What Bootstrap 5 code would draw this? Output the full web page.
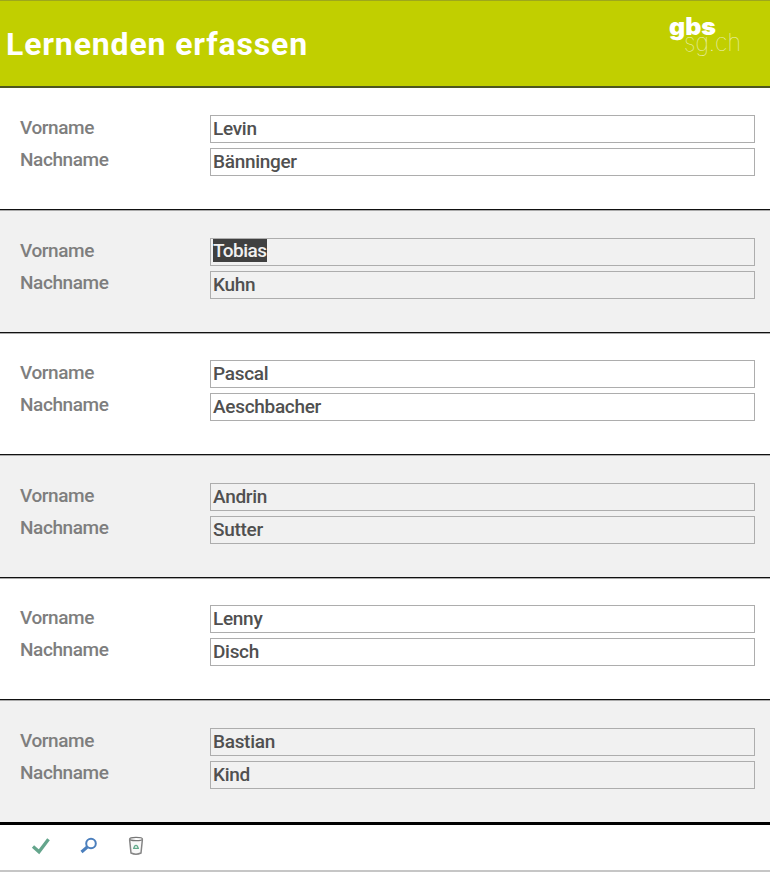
<!DOCTYPE html>
<html lang="de">
<head>
<meta charset="utf-8">
<meta name="viewport" content="width=device-width, initial-scale=1">
<title>Lernenden erfassen</title>
<link href="https://cdn.jsdelivr.net/npm/bootstrap@5.3.0/dist/css/bootstrap.min.css" rel="stylesheet">
<style>
  body { font-family: Roboto, "Liberation Sans", sans-serif; font-size: 19px; height: 872px; overflow: hidden; }
  .app-header { height: 88px; background: #c1cf00; border-top: 1px solid #9da71c; border-bottom: 2px solid #4d5620; padding: 0 23px 0 6px; }
  .app-title { font-size: 32px; font-weight: 700; letter-spacing: .85px; line-height: 86px; }
  .entries { margin-top: -1.5px; }
  .entry { height: 122.5px; padding: 28.7px 15px 0 20px; }
  .entry + .entry { box-shadow: inset 0 1px #111, inset 0 2px #aaa; }
  .entry:nth-child(even) { background: #f1f1f1; }
  .field-row { height: 28px; margin-bottom: 5px; }
  .field-label { flex: 0 0 190px; color: #7e7e7e; line-height: 25px; letter-spacing: -.42px; font-weight: 500; }
  .field-input { height: 28px; border: 1px solid #adadad; border-radius: 0; background: transparent; color: #505050; font-size: 19px; line-height: 26px; padding: 0 2px; letter-spacing: -.3px; font-weight: 500; }
  .field-row + .field-row .field-label { line-height: 24px; }
  .picked { background: #404040; color: #f0f0f0; line-height: 24px; height: 23px; margin-top: 0; letter-spacing: -.5px; display: inline-block; vertical-align: top; }
  .tools { height: 50.5px; border-top: 3px solid #000; border-bottom: 2px solid #c6c6c6; padding: 0 0 2px 31px; }
  .tool-btn { width: 20px; height: 20px; margin-right: 28px; }
  .tool-btn:last-child { margin-left: -1px; }
</style>
<script src="https://cdn.jsdelivr.net/npm/bootstrap@5.3.0/dist/js/bootstrap.bundle.min.js"></script>
</head>
<body class="bg-white">
<header class="app-header d-flex justify-content-between">
  <h1 class="app-title text-white m-0">Lernenden erfassen</h1>
  <svg width="80" height="66" viewBox="667 1 80 66" fill="#fff" aria-label="gbs sg.ch">
    <text x="669" y="35" font-family="Inter, sans-serif" font-weight="900" font-size="24" textLength="47" lengthAdjust="spacingAndGlyphs">gbs</text>
    <text x="684" y="51" font-family="Inter, sans-serif" font-weight="100" font-size="24" opacity=".75" textLength="57" lengthAdjust="spacingAndGlyphs">sg.ch</text>
  </svg>
</header>
<main class="entries">
  <section class="entry">
    <div class="field-row d-flex"><label class="field-label">Vorname</label><div class="field-input form-control flex-fill">Levin</div></div>
    <div class="field-row d-flex"><label class="field-label">Nachname</label><div class="field-input form-control flex-fill">Bänninger</div></div>
  </section>
  <section class="entry">
    <div class="field-row d-flex"><label class="field-label">Vorname</label><div class="field-input form-control flex-fill"><span class="picked">Tobias</span></div></div>
    <div class="field-row d-flex"><label class="field-label">Nachname</label><div class="field-input form-control flex-fill">Kuhn</div></div>
  </section>
  <section class="entry">
    <div class="field-row d-flex"><label class="field-label">Vorname</label><div class="field-input form-control flex-fill">Pascal</div></div>
    <div class="field-row d-flex"><label class="field-label">Nachname</label><div class="field-input form-control flex-fill">Aeschbacher</div></div>
  </section>
  <section class="entry">
    <div class="field-row d-flex"><label class="field-label">Vorname</label><div class="field-input form-control flex-fill">Andrin</div></div>
    <div class="field-row d-flex"><label class="field-label">Nachname</label><div class="field-input form-control flex-fill">Sutter</div></div>
  </section>
  <section class="entry">
    <div class="field-row d-flex"><label class="field-label">Vorname</label><div class="field-input form-control flex-fill">Lenny</div></div>
    <div class="field-row d-flex"><label class="field-label">Nachname</label><div class="field-input form-control flex-fill">Disch</div></div>
  </section>
  <section class="entry">
    <div class="field-row d-flex"><label class="field-label">Vorname</label><div class="field-input form-control flex-fill">Bastian</div></div>
    <div class="field-row d-flex"><label class="field-label">Nachname</label><div class="field-input form-control flex-fill">Kind</div></div>
  </section>
</main>
<footer class="tools d-flex align-items-center">
  <svg class="tool-btn" viewBox="0 0 20 20"><path d="M2 10.5 L8 15.8 L17.5 3.2" fill="none" stroke="#64a58c" stroke-width="3.3"/></svg>
  <svg class="tool-btn" viewBox="0 0 20 20" fill="none" stroke="#4b7fbd"><circle cx="12" cy="7.5" r="4.8" stroke-width="2"/><path d="M8.3 11 L2.5 16" stroke-width="3"/></svg>
  <svg class="tool-btn" viewBox="0 0 20 20" fill="none"><path d="M3.6 3.5 L5 17 Q10 19.3 15 17 L16.4 3.5" fill="#f8f8f8" stroke="#858585" stroke-width="1.5"/><ellipse cx="10" cy="3" rx="6.4" ry="1.7" fill="#fff" stroke="#777" stroke-width="1.2"/><path d="M8.6 10.2 Q10 8.6 11.4 10.2 L12.4 12.4 H7.6 Z" stroke="#62aa8b" stroke-width="1.3" stroke-linejoin="round"/></svg>
</footer>
</body>
</html>
